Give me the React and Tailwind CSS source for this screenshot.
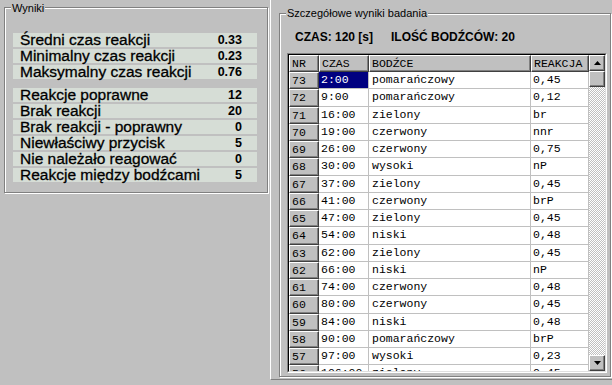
const summaryA = [
  ['Średni czas reakcji', '0.33'],
  ['Minimalny czas reakcji', '0.23'],
  ['Maksymalny czas reakcji', '0.76'],
]

const summaryB = [
  ['Reakcje poprawne', '12'],
  ['Brak reakcji', '20'],
  ['Brak reakcji - poprawny', '0'],
  ['Niewłaściwy przycisk', '5'],
  ['Nie należało reagować', '0'],
  ['Reakcje między bodźcami', '5'],
]

const rows = [
  ['73', '2:00', 'pomarańczowy', '0,45'],
  ['72', '9:00', 'pomarańczowy', '0,12'],
  ['71', '16:00', 'zielony', 'br'],
  ['70', '19:00', 'czerwony', 'nnr'],
  ['69', '26:00', 'czerwony', '0,75'],
  ['68', '30:00', 'wysoki', 'nP'],
  ['67', '37:00', 'zielony', '0,45'],
  ['66', '41:00', 'czerwony', 'brP'],
  ['65', '47:00', 'zielony', '0,45'],
  ['64', '54:00', 'niski', '0,48'],
  ['63', '62:00', 'zielony', '0,45'],
  ['62', '66:00', 'niski', 'nP'],
  ['61', '74:00', 'czerwony', '0,48'],
  ['60', '80:00', 'czerwony', '0,45'],
  ['59', '84:00', 'niski', '0,48'],
  ['58', '90:00', 'pomarańczowy', 'brP'],
  ['57', '97:00', 'wysoki', '0,23'],
  ['56', '106:00', 'zielony', '0,45'],
]

const bevel = 'bg-[#c0c0c0] border-t border-l border-r border-b border-t-white border-l-white border-r-[#404040] border-b-[#404040] shadow-[inset_-1px_-1px_0_#808080]'

function StatRow({ label, value }) {
  return (
    <div className="h-[14px] bg-[#d6ddd6] flex items-center justify-between pl-[7px] pr-[15px]">
      <span className="text-[15.5px] leading-[14px] text-black [-webkit-text-stroke:0.3px_#000]">{label}</span>
      <span className="text-[12.5px] leading-[14px] font-bold text-black">{value}</span>
    </div>
  )
}

function Arrow({ down }) {
  return (
    <svg width="7" height="4" viewBox="0 0 7 4" className="block">
      {down ? <polygon points="0,0 7,0 3.5,4" fill="#000" /> : <polygon points="3.5,0 7,4 0,4" fill="#000" />}
    </svg>
  )
}

function App() {
  return (
    <div className="w-[612px] h-[385px] bg-[#c0c0c0] flex overflow-hidden font-['Liberation_Sans',Arial,sans-serif] text-black">
      <div className="w-[270px] h-[197px] shrink-0">
        <div className="ml-[4px] mt-[7px] w-[264px] h-[186px] border border-[#808080] shadow-[inset_1px_1px_0_#fff,1px_1px_0_#fff]">
          <div className="-mt-[6px] ml-[6px] w-fit bg-[#c0c0c0] px-px text-[11px] leading-[12px]">Wyniki</div>
          <div className="mt-[19px] ml-[8px] w-[244px] flex flex-col gap-[2px]">
            {summaryA.map(([l, v]) => <StatRow key={l} label={l} value={v} />)}
          </div>
          <div className="mt-[9px] ml-[8px] w-[244px] flex flex-col gap-[2px]">
            {summaryB.map(([l, v]) => <StatRow key={l} label={l} value={v} />)}
          </div>
        </div>
      </div>

      <div className="w-[342px] h-[380px] shrink-0 border-l border-white border-b border-b-[#808080]">
        <div className="ml-[8px] mt-[13px] w-[332px] h-[364px] border border-[#808080] shadow-[inset_1px_1px_0_#fff,1px_1px_0_#fff]">
          <div className="-mt-[7px] ml-[6px] w-fit bg-[#c0c0c0] px-px text-[11px] leading-[12px]">Szczegółowe wyniki badania</div>
          <div className="mt-[11px] ml-[15px] flex gap-[18px] text-[12px] leading-[14px] font-bold">
            <span>CZAS: 120 [s]</span>
            <span>ILOŚĆ BODŹCÓW: 20</span>
          </div>

          <div className="mt-[9px] ml-[7px] w-[320px] h-[320px] border border-t-[#808080] border-l-[#808080] border-r-white border-b-white">
            <div className="w-full h-full flex border border-t-black border-l-black border-r-[#dfdfdf] border-b-[#dfdfdf] font-['Liberation_Mono','Courier_New',monospace] text-[11.5px]">
              <div className="w-[300px] h-full flex flex-col overflow-hidden bg-white">
                <div className="h-[17px] shrink-0 flex leading-[15px]">
                  <div className={`w-[30px] pl-[2px] ${bevel}`}>NR</div>
                  <div className={`w-[50px] pl-[2px] ${bevel}`}>CZAS</div>
                  <div className={`w-[162px] pl-[2px] ${bevel}`}>BODŹCE</div>
                  <div className={`w-[58px] pl-[2px] ${bevel}`}>REAKCJA</div>
                </div>
                {rows.map((r, i) => (
                  <div key={r[0]} className="h-[17.25px] shrink-0 flex leading-[16px]">
                    <div className={`w-[30px] pl-[2px] ${bevel}`}>{r[0]}</div>
                    <div className={`w-[50px] pl-[2px] border-r border-b border-[#c0c0c0] ${i === 0 ? 'bg-[#000080] text-white' : ''}`}>{r[1]}</div>
                    <div className="w-[162px] pl-[3px] border-r border-b border-[#c0c0c0]">{r[2]}</div>
                    <div className="w-[58px] pl-[2px] border-r border-b border-[#c0c0c0]">{r[3]}</div>
                  </div>
                ))}
              </div>
              <div className="w-[16px] h-full flex flex-col">
                <div className={`h-[16px] shrink-0 flex items-center justify-center ${bevel}`}>
                  <Arrow />
                </div>
                <div className={`h-[16px] shrink-0 ${bevel}`} />
                <div className="flex-1 bg-[repeating-conic-gradient(#c0c0c0_0%_25%,#ffffff_0%_50%)] bg-[length:2px_2px]" />
                <div className={`h-[16px] shrink-0 flex items-center justify-center ${bevel}`}>
                  <Arrow down />
                </div>
              </div>
            </div>
          </div>
        </div>
      </div>
    </div>
  )
}

export default App
